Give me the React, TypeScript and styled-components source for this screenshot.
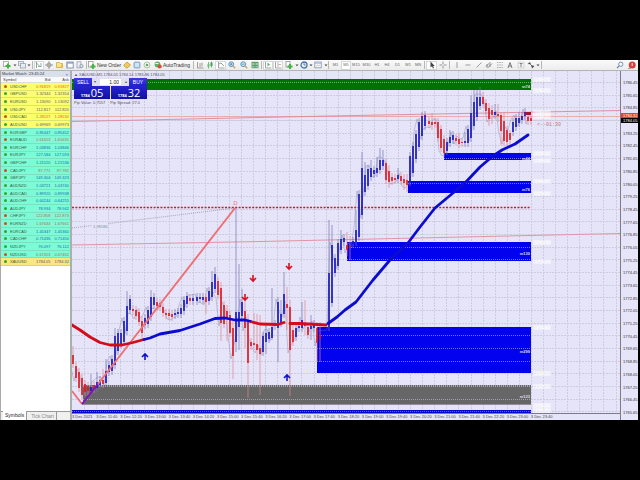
import React from "react";
import styled, { createGlobalStyle, css } from "styled-components";

const GlobalStyle = createGlobalStyle`
  * { box-sizing: border-box; }
  body { margin: 0; background: #000; font-family: "Liberation Sans", Arial, sans-serif; color: #333; }
  button, input { font: inherit; color: inherit; margin: 0; padding: 0; border: 0; background: none; }
  ul, ol { list-style: none; margin: 0; padding: 0; }
`;

const Screen = styled.div`
  min-height: 100vh;
  padding: 60px 2px 60px 0;
  display: flex;
  flex-direction: column;
`;

const Terminal = styled.div`
  flex: 1;
  display: flex;
  flex-direction: column;
  background: #f0f0f0;
`;

/* ---------- toolbar ---------- */

const Toolbar = styled.div`
  display: flex;
  align-items: center;
  height: 11px;
  background: linear-gradient(#fafafa, #ececec);
  border-bottom: 1px solid #b4b4b4;
  overflow: hidden;
`;

const ToolButton = styled.button<{ $w: number; $pressed?: boolean }>`
  flex: none;
  width: ${(p) => p.$w}px;
  height: 9px;
  display: flex;
  align-items: center;
  justify-content: center;
  gap: 1px;
  font-size: 5px;
  line-height: 8px;
  white-space: nowrap;
  color: #333;
  ${(p) =>
    p.$pressed &&
    css`
      background: #fff;
      box-shadow: inset 0 0 0 1px #d4d7dc;
    `}
  svg { display: block; flex: none; opacity: 0.85; }
`;

const PeriodButton = styled(ToolButton)`
  font-size: 4px;
  color: #666;
`;

const Grip = styled.span`
  flex: none;
  width: 1px;
  height: 8px;
  margin: 0 1px;
  background: #b8b8b8;
`;

const Spacer = styled.span`
  flex: 1;
`;

type IconName =
  | "newChart" | "profiles" | "down" | "market" | "cross" | "folder" | "window" | "tester" | "order"
  | "gold" | "community" | "signal" | "auto" | "bars" | "candles" | "line" | "zoomIn" | "zoomOut"
  | "tile" | "shift" | "scroll" | "indicator" | "clock" | "template" | "cursor" | "crosshair" | "vline" | "hline"
  | "trend" | "channel" | "fibo" | "text" | "label" | "arrows" | "search" | "alert";

const drawings: Record<IconName, React.ReactNode> = {
  newChart: <><rect x="0.5" y="0.5" width="5" height="5" fill="#fff" stroke="#8a9a8a" strokeWidth="0.8" /><path d="M5 2.5v5M2.5 5h5" stroke="#28a828" strokeWidth="2" /></>,
  profiles: <><rect x="0.5" y="0.5" width="5" height="4" fill="#e4ecf4" stroke="#8896ac" strokeWidth="0.8" /><rect x="2.5" y="2.5" width="5" height="4.5" fill="#e4ecf4" stroke="#8896ac" strokeWidth="0.8" /></>,
  down: <path d="M2.5 3.5h3L4 5.2z" fill="#222" />,
  market: <><path d="M1.5 1v6M1 1.5l4 4" stroke="#4c8c50" strokeWidth="0.8" /><path d="M6 2v4M3 5.5h3" stroke="#7080a0" strokeWidth="0.8" /></>,
  cross: <><circle cx="4" cy="4" r="2" fill="none" stroke="#777" strokeWidth="0.8" /><path d="M4 0v8M0 4h8" stroke="#777" strokeWidth="0.8" /></>,
  crosshair: <path d="M4 0.5v2.7M4 4.8v2.7M0.5 4h2.7M4.800 4h2.7" stroke="#777" strokeWidth="0.9" />,
  folder: <><path d="M0.5 1.5h3l1 1h2v4h-6z" fill="#ffe27a" stroke="#c89c20" strokeWidth="0.8" /><path d="M5 3.5l2.5 2L5 7.5z" fill="#f0b020" /></>,
  window: <><rect x="0.8" y="1" width="6.4" height="6" fill="#fff" stroke="#5870a0" strokeWidth="0.8" /><path d="M1 2h6" stroke="#5870a0" /><path d="M1.5 3v4" stroke="#98b0d8" /></>,
  tester: <><rect x="1" y="0.8" width="4" height="6" fill="#eef" stroke="#8090a8" strokeWidth="0.8" /><circle cx="5.4" cy="5" r="1.6" fill="#d8e4f4" stroke="#688" strokeWidth="0.8" /></>,
  order: <><rect x="0.5" y="0.5" width="4.5" height="5.5" fill="#fff" stroke="#888" strokeWidth="0.8" /><path d="M5 3v5M2.5 5.5h5" stroke="#28a828" strokeWidth="1.8" /></>,
  gold: <path d="M0.5 4.5L4 1l3.5 3L4 7.2z" fill="#f2c53c" stroke="#a87c18" strokeWidth="0.7" />,
  community: <><rect x="1" y="1" width="6" height="6" rx="1" fill="#9cc4e4" stroke="#5888b0" strokeWidth="0.7" /><path d="M2 3h4M2 5h4" stroke="#fff" /></>,
  signal: <><circle cx="4" cy="4" r="3" fill="none" stroke="#9cc09c" /><circle cx="4" cy="4" r="1.3" fill="#4c9c4c" /></>,
  auto: <><circle cx="3.5" cy="3.5" r="2.9" fill="#48a850" /><path d="M1.5 2.5h3" stroke="#fff" /><circle cx="5.7" cy="5.5" r="2" fill="#d82c20" /></>,
  bars: <path d="M1.5 1v6h6M4 2v4M6 1.5v4" stroke="#777" strokeWidth="0.8" fill="none" />,
  candles: <><path d="M2.5 1v6.5M5.5 0.5v6" stroke="#2c8c3c" strokeWidth="0.7" /><rect x="1.5" y="3" width="2" height="3" fill="#58b868" /><rect x="4.5" y="1.5" width="2" height="3.5" fill="#2c8c3c" /></>,
  line: <><path d="M1.5 1v6h6" stroke="#777" fill="none" strokeWidth="0.8" /><path d="M2 3l2-1 3 3" stroke="#488c58" fill="none" strokeWidth="0.8" /></>,
  zoomIn: <><circle cx="3.2" cy="3.2" r="2.4" fill="#cce6f8" stroke="#3c84b8" /><path d="M2 3.2h2.4M3.2 2v2.4" stroke="#246" strokeWidth="0.6" /><path d="M5 5l2.2 2.2" stroke="#c89c30" strokeWidth="1.4" /></>,
  zoomOut: <><circle cx="3.2" cy="3.2" r="2.4" fill="#cce6f8" stroke="#3c84b8" /><path d="M2 3.2h2.4" stroke="#246" strokeWidth="0.6" /><path d="M5 5l2.2 2.2" stroke="#c89c30" strokeWidth="1.4" /></>,
  tile: <><rect x="0.5" y="0.8" width="7" height="6.4" fill="#3f9448" /><path d="M1 3h2.5M4.5 3H7" stroke="#d8f0d8" /><path d="M1 5.8h2.5M4.5 5.8H7" stroke="#a8c8f0" /></>,
  shift: <><path d="M1.5 1v6h6" stroke="#777" fill="none" strokeWidth="0.8" /><path d="M3.500 1.500v4l2.5-2z" fill="#4c9c58" /></>,
  scroll: <><path d="M1.5 1v6h6" stroke="#777" fill="none" strokeWidth="0.8" /><path d="M4 1v5M4.5 3.5H7" stroke="#a87870" strokeWidth="0.7" /></>,
  indicator: <><rect x="1" y="0.5" width="4" height="5.5" fill="#fff" stroke="#788" strokeWidth="0.8" /><path d="M5 3v5M2.5 5.5h5" stroke="#28a828" strokeWidth="2" /></>,
  clock: <><circle cx="4" cy="4" r="3" fill="#e8f2fc" stroke="#2860a8" strokeWidth="1.3" /><path d="M4 2.2V4h1.6" stroke="#333" strokeWidth="0.7" fill="none" /></>,
  template: <><rect x="0.8" y="1" width="6.4" height="5.8" fill="#fff" stroke="#6880a8" strokeWidth="0.8" /><path d="M1 2.2h6" stroke="#88a8d0" /><path d="M2 5l1.5-1 1 .8L6 4" stroke="#986" strokeWidth="0.6" fill="none" /></>,
  cursor: <path d="M2.5 0.5v6l1.5-1.3 1 2.2 1-.5-1-2h1.8z" fill="#222" />,
  vline: <path d="M4 1v6" stroke="#777" strokeWidth="0.8" />,
  hline: <path d="M1.5 4h5" stroke="#777" strokeWidth="0.8" />,
  trend: <path d="M1.5 6.5l5-5" stroke="#777" strokeWidth="0.8" />,
  channel: <path d="M1 5.5l4.500-4.500M2.500 7L7 2.500M2 3v3.500M5 2.500v3.500" stroke="#666" strokeWidth="0.8" />,
  fibo: <path d="M1 1.5h6M1 4h6M1 6.5h6" stroke="#888" strokeWidth="0.8" strokeDasharray="1 0.6" />,
  text: <path d="M2 7l2-5.5L6 7M2.8 5h2.4" stroke="#555" strokeWidth="0.9" fill="none" />,
  label: <><rect x="1" y="1" width="6" height="6" fill="none" stroke="#999" strokeWidth="0.6" strokeDasharray="1 0.7" /><path d="M2.5 2.5h3M4 2.5V6" stroke="#555" strokeWidth="0.8" /></>,
  arrows: <><path d="M0.5 3L3 1l1 2.2z" fill="#333" /><path d="M4 4l3.5 1L5 7.5z" fill="#333" /><path d="M2 2l4 4" stroke="#333" strokeWidth="0.7" /></>,
  search: <><circle cx="4.8" cy="3.2" r="2.1" fill="#fff" stroke="#4870a0" strokeWidth="0.9" /><path d="M3.2 4.8L1 7" stroke="#4870a0" strokeWidth="1.1" /></>,
  alert: <><circle cx="4.2" cy="4" r="3.5" fill="#d82020" /><path d="M4.2 2v3" stroke="#fff" strokeWidth="0.9" /><path d="M0 7.5h3" stroke="#999" /></>,
};

const Icon = ({ name }: { name: IconName }) => (
  <svg width="8" height="8" viewBox="0 0 8 8" aria-hidden="true">{drawings[name]}</svg>
);

type Tool = { icon?: IconName; w?: number; text?: string; pressed?: boolean; grip?: boolean };
const tools: Tool[] = [
  { icon: "newChart", w: 13 }, { icon: "down", w: 3 }, { icon: "profiles", w: 11 }, { icon: "down", w: 4 },
  { grip: true }, { icon: "market", w: 10, pressed: true }, { icon: "cross", w: 10 }, { icon: "folder", w: 11 },
  { icon: "window", w: 10 }, { icon: "tester", w: 10 }, { grip: true },
  { icon: "order", w: 33, text: "New Order" }, { icon: "gold", w: 11 }, { icon: "community", w: 10 },
  { icon: "signal", w: 10 }, { icon: "auto", w: 40, text: "AutoTrading" }, { grip: true },
  { icon: "bars", w: 10 }, { icon: "candles", w: 10 }, { icon: "line", w: 11, pressed: true },
  { icon: "zoomIn", w: 12 }, { icon: "zoomOut", w: 11 }, { icon: "tile", w: 11 }, { grip: true },
  { icon: "shift", w: 10, pressed: true }, { icon: "scroll", w: 10, pressed: true }, { icon: "indicator", w: 12 },
  { icon: "down", w: 3 }, { icon: "clock", w: 11 }, { icon: "down", w: 3 }, { icon: "template", w: 12 },
  { icon: "down", w: 3 }, { grip: true },
];
const drawTools: Tool[] = [
  { grip: true }, { icon: "cursor", w: 11, pressed: true }, { icon: "crosshair", w: 11 }, { grip: true },
  { icon: "vline", w: 11 }, { icon: "hline", w: 11 }, { icon: "trend", w: 11 }, { icon: "channel", w: 10 },
  { icon: "fibo", w: 11 }, { icon: "text", w: 10 }, { icon: "label", w: 11 }, { icon: "arrows", w: 10 },
  { icon: "down", w: 4 }, { grip: true },
];
const periods = ["M1", "M5", "M15", "M30", "H1", "H4", "D1", "W1", "MN"];

const ToolRun = ({ items }: { items: Tool[] }) => (
  <>
    {items.map((t, i) =>
      t.grip ? <Grip key={i} /> : (
        <ToolButton key={i} $w={t.w!} $pressed={t.pressed} aria-label={t.text ?? t.icon}>
          <Icon name={t.icon!} />
          {t.text}
        </ToolButton>
      )
    )}
  </>
);

/* ---------- market watch ---------- */

const Body = styled.div`
  flex: 1;
  display: flex;
`;

const WatchPanel = styled.aside`
  flex: none;
  width: 72px;
  display: flex;
  flex-direction: column;
  background: #fff;
  border-left: 1px solid #aaa;
  border-right: 2px solid #a9b0ae;
`;

const WatchTitle = styled.header`
  display: flex;
  justify-content: space-between;
  height: 6px;
  padding: 0 2px 0 1px;
  font-size: 4px;
  line-height: 6px;
  background: #d9e0ea;
  color: #334;
`;

const CloseButton = styled.button`
  line-height: 5px;
`;

const Quotes = styled.table`
  width: 100%;
  height: 189px;
  border-collapse: collapse;
  font-size: 4px;
  line-height: 5px;
  th, td { padding: 0 1px 0 0; text-align: right; font-weight: 400; }
  th { color: #444; background: #fafafa; border-bottom: 1px solid #ddd; }
  th:first-child, td:first-child { text-align: left; padding-left: 2px; }
`;

const QuoteRow = styled.tr<{ $zone: "yellow" | "mint" | "gold"; $down: boolean }>`
  background: ${(p) => ({ yellow: "#ffff6e", mint: "#7dfbd6", gold: "#fbe77c" })[p.$zone]};
  border-bottom: 1px solid rgba(120, 160, 130, 0.28);
  color: ${(p) => (p.$down ? (p.$zone === "yellow" ? "#f0541c" : "#a87058") : p.$zone === "mint" ? "#1670b0" : "#56606c")};
  td:first-child { color: #355c40; }
`;

const Direction = styled.span<{ $down: boolean }>`
  display: inline-block;
  width: 3px;
  height: 3px;
  margin: 0 3px 0 1px;
  border-radius: 50%;
  background: ${(p) => (p.$down ? "#c8501c" : "#2ea82e")};
`;

const quotes: [string, string, string, boolean][] = [
  ["USDCHF", "0.91819", "0.91827", true], ["GBPUSD", "1.32344", "1.32354", false],
  ["EURUSD", "1.13090", "1.13092", false], ["USDJPY", "112.817", "112.820", false],
  ["USDCAD", "1.28527", "1.28530", true], ["AUDUSD", "0.69969", "0.69973", false],
  ["EURGBP", "0.85447", "0.85452", false], ["EURAUD", "1.61613", "1.61635", true],
  ["EURCHF", "1.03836", "1.03846", false], ["EURJPY", "127.584", "127.593", false],
  ["GBPCHF", "1.21520", "1.21536", false], ["CADJPY", "87.771", "87.782", true],
  ["GBPJPY", "149.304", "149.323", false], ["AUDNZD", "1.03721", "1.03740", false],
  ["AUDCAD", "0.89920", "0.89938", false], ["AUDCHF", "0.64244", "0.64255", false],
  ["AUDJPY", "78.934", "78.942", false], ["CHFJPY", "122.858", "122.873", true],
  ["EURNZD", "1.67634", "1.67661", true], ["EURCAD", "1.45347", "1.45360", false],
  ["CADCHF", "0.71436", "0.71450", false], ["NZDJPY", "76.097", "76.112", false],
  ["NZDUSD", "0.67453", "0.67462", true], ["XAUUSD", "1784.05", "1784.32", false],
];
const zoneOf = (i: number) => (i < 6 ? "yellow" : i < 23 ? "mint" : "gold");

const Tabs = styled.div`
  margin-top: auto;
  display: flex;
  height: 9px;
  border-top: 1px solid #999;
  background: #f0f0f0;
  font-size: 5px;
  line-height: 7px;
`;

const Tab = styled.button<{ $active?: boolean }>`
  padding: 0 2px;
  margin-left: 2px;
  color: ${(p) => (p.$active ? "#222" : "#888")};
  background: ${(p) => (p.$active ? "#fff" : "none")};
  border-right: 1px solid #999;
  margin-top: ${(p) => (p.$active ? "-1px" : "0")};
`;

/* ---------- chart ---------- */

const Chart = styled.main`
  position: relative;
  flex: 1;
  display: grid;
  grid-template-columns: 1fr 18px;
  grid-template-rows: 1fr 7px;
  background: #e6e4f8;
`;

const Plot = styled.svg`
  display: block;
  width: 100%;
  height: 100%;
  min-height: 0;
  font-family: "Liberation Sans", Arial, sans-serif;
`;

const PriceAxis = styled.ol`
  grid-row: 1 / span 2;
  grid-column: 2;
  display: flex;
  flex-direction: column;
  justify-content: space-between;
  padding: 9px 0 5px;
  border-left: 1px solid #7c7c88;
  font-size: 4px;
  line-height: 5px;
  color: #333;
`;

const Price = styled.li<{ $current?: boolean }>`
  position: relative;
  height: 5px;
  padding-left: 2px;
  ${(p) => p.$current && "background: #000; color: #fff;"}
`;

const AskTag = styled.span`
  position: absolute;
  left: 0;
  right: 0;
  top: -5px;
  padding-left: 2px;
  background: #f0401c;
  color: #fff;
`;

const TimeAxis = styled.ol`
  grid-row: 2;
  grid-column: 1;
  display: grid;
  grid-template-columns: repeat(20, 1fr);
  padding-right: 65px;
  border-top: 1px solid #7c7c88;
  font-size: 4px;
  line-height: 5px;
  color: #444;
  li { min-width: 0; white-space: nowrap; }
`;

const ChartHeader = styled.div`
  position: absolute;
  left: 2px;
  top: 1px;
  font-size: 4px;
  line-height: 6px;
  color: #555;
  white-space: nowrap;
`;

const TradePanel = styled.div`
  display: grid;
  grid-template-columns: 18px 18px 1px 18px 18px;
  grid-template-rows: 8px 13px;
  width: 73px;
  margin-bottom: 1px;
  color: #fff;
  background: #e8e8f4;
`;

const SideButton = styled.button`
  background: linear-gradient(#3c3ce0, #2020c8);
  color: #fff;
  font-size: 5px;
  line-height: 8px;
`;

const Volume = styled.label`
  grid-column: span 3;
  display: flex;
  align-items: center;
  justify-content: space-around;
  background: #e0e0ee;
  color: #555;
  input { width: 21px; height: 6px; background: #fff; color: #222; font-size: 5px; text-align: right; padding-right: 2px; }
`;

const PriceButton = styled.button<{ $right?: boolean }>`
  grid-column: ${(p) => (p.$right ? "4 / span 2" : "1 / span 2")};
  display: flex;
  align-items: flex-end;
  justify-content: center;
  gap: 1px;
  background: linear-gradient(#2424cc, #1010a8);
  color: #fff;
  font-family: "Open Sans", sans-serif;
  font-size: 4px;
  font-weight: 700;
  line-height: 7px;
  span { font-size: 11px; line-height: 13px; font-weight: 400; }
`;

const PipRow = styled.div`
  display: flex;
  gap: 5px;
`;

const LEFT = 72, TOP = 71, WIDTH = 548, HEIGHT = 342, ZONE_END = 531;
const range = (n: number) => Array.from({ length: n }, (_, i) => i);
const gridY = range(27).map((i) => 82.5 + Math.round(i * 12.67));
const gridX = range(45).map((i) => 84.5 + Math.round(i * 12.08));

/* x, body top, body bottom, rising(1)/falling(0), optional wick top and bottom */
type Candle = [number, number, number, 0 | 1, number?, number?];
const candles: Candle[] = [
  [73,355,364,0,346], [76,366,378,0], [79,372,388,0], [82,378,395,0], [85,384,392,0], [88,386,391,0,382], [91,387,391,1,374],
  [94,385,389,0], [97,382,388,1,372], [100,380,385,1], [103,380,384,0,369], [106,371,383,1,359], [109,365,372,1], [112,359,371,1],
  [115,336,365,1,328], [118,333,351,1], [121,333,344,1], [124,321,342,1], [127,306,331,1,291], [130,299,310,1,295], [133,309,311,0],
  [136,310,316,0], [139,312,322,0], [142,321,333,0,316,340], [145,318,325,1], [148,310,324,1], [151,297,317,1,290], [154,297,305,1],
  [157,302,306,0], [160,303,307,0], [163,307,313,0], [166,313,315,0], [169,313,316,0], [172,314,317,0], [175,313,315,1],
  [178,312,314,1], [181,308,314,1], [184,300,311,1], [187,296,304,1], [190,298,301,0], [193,298,301,1], [197,297,301,1],
  [200,297,299,1], [203,297,300,1], [206,297,302,0,294,314], [209,291,301,1], [212,282,297,1,271], [215,274,289,1,267],
  [218,281,295,0], [221,288,323,0,282,341], [224,305,324,0], [227,311,319,0,305,341], [230,315,333,0], [233,328,356,0,320,379],
  [236,312,342,1,208,352], [239,312,327,1,264,350], [242,302,316,1,289], [245,311,328,0,300,348], [248,320,363,0,314,398],
  [251,342,346,0], [254,343,345,0,313,350], [257,344,350,0,314,360], [260,348,354,0,315,395], [263,336,352,1], [266,333,342,1,325,354],
  [269,332,339,1], [272,327,338,1,288,340], [275,324,326,1], [278,302,328,1,297,362], [281,314,323,1,300], [284,294,314,1,272],
  [287,304,308,0,287,330], [290,307,350,0,300,396], [293,330,342,0,322,346], [296,328,337,1], [299,326,328,1], [302,320,328,1,302],
  [305,324,326,0,300,335], [308,327,335,0], [311,326,329,1,315,340], [314,324,328,1], [317,328,343,0,322,362], [320,334,339,0,322,362],
  [329,273,327,1,220], [332,245,303,1,225], [335,258,273,1], [338,243,266,1], [341,239,250,1,230], [344,238,242,1],
  [347,245,250,0,232,256], [350,246,248,0,236,260], [353,241,244,1], [356,230,242,1,210], [359,194,237,1], [362,168,215,1,152],
  [365,175,192,1,162], [368,169,186,1], [371,168,177,1,160], [374,170,174,1], [377,168,173,1,157], [380,160,170,1,148], [383,160,166,1,150],
  [386,163,180,0], [389,171,182,0,165,188], [392,177,181,0], [395,178,180,0], [398,175,179,1,168], [401,176,181,0], [404,179,183,0,174,190],
  [407,180,185,0,174,192], [410,156,182,1], [413,146,173,1], [416,134,159,1], [419,122,147,1], [422,116,136,1], [425,115,126,1],
  [429,121,124,0], [432,122,125,0,113,130], [435,122,124,0], [438,122,138,0], [441,129,148,0], [444,139,153,0], [447,142,151,1],
  [450,137,143,1,130], [453,135,140,1], [456,138,141,0], [459,139,144,0,133,148], [462,142,143,0], [465,141,143,1,132], [468,129,143,1],
  [471,113,138,1,95], [474,102,126,1,90], [477,97,117,1,90], [480,97,106,1,87], [483,97,104,0,92], [486,103,111,0], [489,108,119,0,103,126],
  [492,110,115,0,105,124], [495,112,115,1,104], [498,114,116,0,104,122], [501,115,131,0,112,145], [504,121,141,0,112,146], [507,130,142,0],
  [510,133,140,0,130,146], [513,122,132,1], [516,118,127,1], [519,118,123,1,112], [522,116,120,1], [525,112,116,1], [528,117,121,0], [531,118,121,0],
];
const high = (c: Candle) => c[4] ?? c[1] - 4;
const low = (c: Candle) => c[5] ?? c[2] + 4;
const swing = candles.map((c, i) => `${c[0] - 2},${(i % 4 < 2) === (c[3] === 1) ? c[1] - 3 : c[2] + 3}`).join(" ");

const zones = [
  { x: 72, y: 79, h: 11, fill: "#007204", name: "m74" },
  { x: 444, y: 153, h: 7, fill: "#0202ee", name: "m44" },
  { x: 408, y: 181, h: 12, fill: "#0202ee", name: "m76" },
  { x: 347, y: 242, h: 19, fill: "#0202ee", name: "m130" },
  { x: 317, y: 327, h: 46, fill: "#0202ee", name: "m299" },
  { x: 83, y: 385, h: 19, fill: "#666", name: "m123" },
];
const levels: [number, string][] = [
  [79, "1786.71"], [90, "1785.91"], [112, "1784.51"], [116, "1784.32"], [153, "1782.01"], [160, "1781.54"], [181, "1780.22"],
  [193, "1779.45"], [242, "1776.39"], [261, "1775.13"], [327, "1770.84"], [373, "1768.15"], [386, "1767.20"], [405, "1766.11"], [410, "1765.70"],
];

const Arrow = ({ x, y, up }: { x: number; y: number; up?: boolean }) => (
  <path
    d={up ? `M${x} ${y + 3}v-6M${x - 3} ${y}l3-3 3 3` : `M${x} ${y - 3}v6M${x - 3} ${y}l3 3 3-3`}
    fill="none" stroke={up ? "#1010c8" : "#dc1020"} strokeWidth="1.6"
  />
);

const PlotDrawing = () => (
  <Plot viewBox={`${LEFT} ${TOP} ${WIDTH} ${HEIGHT}`} preserveAspectRatio="none" role="img" aria-label="XAUUSD M5 chart">
    <g stroke="#cdccdf" strokeDasharray="2 1">
      {gridX.map((x) => <path key={x} d={`M${x} 71V413`} />)}
      {gridY.map((y) => <path key={y} d={`M72 ${y}H620`} />)}
    </g>
    {zones.map((z) => <rect key={z.name} x={z.x} y={z.y} width={ZONE_END - z.x} height={z.h} fill={z.fill} />)}
    <g stroke="#d8d8f0" strokeOpacity="0.6" strokeWidth="0.9" strokeDasharray="1 1">
      {zones.map((z) =>
        gridY.filter((y) => y > z.y && y < z.y + z.h).map((y) => <path key={y} d={`M${z.x} ${y}H${ZONE_END}`} />)
      )}
      <path d="M83 385.5H531" />
    </g>
    <rect x={72} y={410} width={ZONE_END - 72} height={3} fill="#0808c8" />
    <path d="M72 411.5H531" stroke="#5c5cf0" strokeDasharray="1 1" />
    <path d="M72 116.5H620" stroke="#eaa4a8" strokeWidth="0.9" />
    <path d="M72 120.5H620" stroke="#c8c8d6" strokeWidth="0.6" />
    <path d="M72 121.5L329 116L620 110.5" stroke="#dc8898" strokeWidth="0.9" fill="none" />
    <path d="M72 245L260 241.5L620 233.5" stroke="#e08c98" strokeWidth="0.9" fill="none" />
    <path d="M82 404.5H531" stroke="#88708c" strokeWidth="0.8" />
    <path d="M72 207.5H531" stroke="#cc1830" strokeWidth="1.4" strokeDasharray="2 1.400" />
    <path d="M72 228L235 208" stroke="#808ca0" strokeWidth="0.7" strokeDasharray="1 1" />
    <rect x="92" y="223" width="16" height="5" fill="#e6e4f8" />
    <text x="93" y="227.5" fontSize="4" fill="#7890a0">1.98186</text>
    <polyline points={swing} fill="none" stroke="#77779a" strokeOpacity="0.6" strokeWidth="0.6" />
    {candles.map((c) => (
      <g key={c[0]}>
        <path d={`M${c[0]} ${high(c)}V${low(c)}`} stroke={c[3] ? "#7474b4" : "#dc8492"} strokeWidth="0.7" />
        <path d={`M${c[0]} ${c[1]}V${c[2]}`} stroke={c[3] ? "#1414bc" : "#dc1420"} strokeWidth="1.6" />
      </g>
    ))}
    <path d="M72 391L82 404M98 384L235 208" stroke="#ee7074" strokeWidth="1.9" />
    <path d="M82 404L98 384" stroke="#8010c0" strokeWidth="2" />
    <text x="235.5" y="205" fontSize="6" fill="#ec7078" textAnchor="middle">D</text>
    <g fill="none" strokeWidth="2.8" strokeLinecap="round" strokeLinejoin="round">
      <path d="M72 325L80 330L90 337L100 342.500L110 345H122L133 342.500L144 339.500" stroke="#d20c18" />
      <path d="M144 339.500L150 338L160 334L180 330.500L200 324L215 318.500L225 318L235 320L245 320L251 321.500" stroke="#0c0cd0" />
      <path d="M252 322L260 324L278 324.500L284 322.500M290 323.500H300L326 325" stroke="#d20c18" />
      <path d="M328 323.500L337 317L345 310L356 302L373 280L390 260L408 243L420 227L435 208L453 193L465 183L480 167L493 156L502 150L515 144L528 135" stroke="#0c0cd0" />
    </g>
    <rect x="525" y="112" width="6" height="3" fill="#a01830" />
    <Arrow x={253} y={278} />
    <Arrow x={245} y={297} />
    <Arrow x={289} y={266} />
    <Arrow x={145} y={357} up />
    <Arrow x={287} y={378} up />
    {zones.map((z) => (
      <text key={z.name} x={530} y={z.y + Math.max(z.h - 2, z.h / 2 + 3) - (z.h > 40 ? 18 : z.h > 15 ? 4 : 0)} fontSize="4" fontWeight="700" fill="#dde" textAnchor="end">{z.name}</text>
    ))}
    {levels.map(([y, label]) => (
      <g key={y}>
        <rect x={533} y={y - 2} width={18} height={5} fill="#fff" fillOpacity="0.4" />
        <text x={535} y={y + 2} fontSize="4" fill="#fff">{label}</text>
      </g>
    ))}
    <text x={537} y={126} fontSize="5" fontFamily="'Liberation Mono', monospace" fill="#c8747c">&lt;--01:30</text>
  </Plot>
);

const prices = range(27).map((i) => (1786.45 - i * 0.8).toFixed(2));
const times = ["2021", ...range(19).map((i) => {
  const m = 700 + i * 40;
  return `${Math.floor(m / 60)}:${String(m % 60).padStart(2, "0")}`;
})];

export default function App() {
  return (
    <>
      <GlobalStyle />
      <Screen>
        <Terminal>
          <Toolbar role="toolbar">
            <ToolRun items={tools} />
            {periods.map((p, i) => <PeriodButton key={p} $w={i % 3 === 0 ? 11 : 10} $pressed={p === "M5"}>{p}</PeriodButton>)}
            <ToolRun items={drawTools} />
            <Spacer />
            <ToolButton $w={12} aria-label="Search"><Icon name="search" /></ToolButton>
            <ToolButton $w={12} aria-label="Notifications"><Icon name="alert" /></ToolButton>
          </Toolbar>
          <Body>
            <WatchPanel>
              <WatchTitle>
                Market Watch: 23:45:24
                <CloseButton aria-label="Close">×</CloseButton>
              </WatchTitle>
              <Quotes>
                <thead>
                  <tr><th>Symbol</th><th>Bid</th><th>Ask</th></tr>
                </thead>
                <tbody>
                  {quotes.map(([name, bid, ask, down], i) => (
                    <QuoteRow key={name} $zone={zoneOf(i)} $down={down}>
                      <td><Direction $down={down} />{name}</td>
                      <td>{bid}</td>
                      <td>{ask}</td>
                    </QuoteRow>
                  ))}
                </tbody>
              </Quotes>
              <Tabs>
                <Tab $active>Symbols</Tab>
                <Tab>Tick Chart</Tab>
              </Tabs>
            </WatchPanel>
            <Chart>
              <PlotDrawing />
              <PriceAxis>
                {prices.map((p, i) => (
                  <Price key={p} $current={i === 3}>
                    {i === 3 ? "1784.05" : p}
                    {i === 3 && <AskTag>1784.32</AskTag>}
                  </Price>
                ))}
              </PriceAxis>
              <TimeAxis>
                {times.map((t) => <li key={t}>3 Dec {t}</li>)}
              </TimeAxis>
              <ChartHeader>
                ▲ XAUUSD,M5 1784.05 1784.14 1783.86 1784.05
                <TradePanel>
                  <SideButton>SELL</SideButton>
                  <Volume>
                    <span>▾</span>
                    <input aria-label="Volume" defaultValue="1.00" />
                    <span>▴</span>
                  </Volume>
                  <SideButton>BUY</SideButton>
                  <PriceButton>1784<span>05</span></PriceButton>
                  <PriceButton $right>1784<span>32</span></PriceButton>
                </TradePanel>
                <PipRow>
                  <span>Pip Value: 0.7557</span>
                  <span>Pip Spread: 27.0</span>
                </PipRow>
              </ChartHeader>
            </Chart>
          </Body>
        </Terminal>
      </Screen>
    </>
  );
}
